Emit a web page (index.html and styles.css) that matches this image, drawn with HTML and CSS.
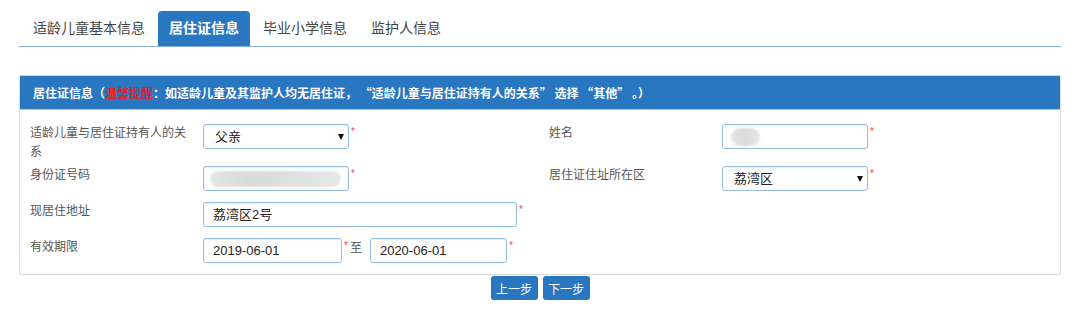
FILE: index.html
```html
<!DOCTYPE html>
<html lang="zh-CN">
<head>
<meta charset="utf-8">
<title>居住证信息</title>
<link rel="stylesheet" href="styles.css">
</head>
<body>
<div class="page">
  <ul class="tabs">
    <li class="tab">适龄儿童基本信息</li>
    <li class="tab active">居住证信息</li>
    <li class="tab">毕业小学信息</li>
    <li class="tab">监护人信息</li>
  </ul>

  <div class="panel">
    <div class="panel-head">居住证信息（<span class="warn">温馨提醒</span>：如适龄儿童及其监护人均无居住证， “适龄儿童与居住证持有人的关系” 选择 “其他” 。）</div>
    <div class="panel-body">
      <div class="form">
        <div class="field">
          <div class="label">适龄儿童与居住证持有人的关系</div>
          <div class="ctl select w146"><span>父亲</span><i class="caret"></i></div>
          <span class="req">*</span>
        </div>
        <div class="field">
          <div class="label">姓名</div>
          <div class="ctl w146 blurbox"><span class="blob blob-name"></span></div>
          <span class="req">*</span>
        </div>
        <div class="field">
          <div class="label">身份证号码</div>
          <div class="ctl w146 blurbox"><span class="blob blob-id"></span></div>
          <span class="req">*</span>
        </div>
        <div class="field">
          <div class="label">居住证住址所在区</div>
          <div class="ctl select w146"><span>荔湾区</span><i class="caret"></i></div>
          <span class="req">*</span>
        </div>
        <div class="field full">
          <div class="label">现居住地址</div>
          <div class="ctl w314">荔湾区2号</div>
          <span class="req">*</span>
        </div>
        <div class="field full">
          <div class="label">有效期限</div>
          <div class="ctl w139">2019-06-01</div>
          <span class="req">*</span>
          <span class="to">至</span>
          <div class="ctl w137">2020-06-01</div>
          <span class="req">*</span>
        </div>
      </div>
    </div>
  </div>

  <div class="actions">
    <button class="btn" type="button">上一步</button>
    <button class="btn" type="button">下一步</button>
  </div>
</div>
</body>
</html>
```

FILE: styles.css
```css
* { box-sizing: border-box; }

body {
  margin: 0;
  background: #fff;
  font-family: "Liberation Sans", "Noto Sans CJK SC", sans-serif;
  color: #555;
}

.page {
  width: 1080px;
  padding: 11px 19px 0 19px;
}

.tabs {
  list-style: none;
  margin: 0;
  padding: 0 0 0 3px;
  display: flex;
  border-bottom: 1px solid #86aedb;
}

.tab {
  height: 35px;
  line-height: 35px;
  padding: 0 11px;
  margin-right: 2px;
  font-size: 14px;
  color: #444;
}

.tab.active {
  background: #2a77c1;
  color: #fff;
  font-weight: bold;
  border-radius: 4px 4px 0 0;
}

.panel {
  margin-top: 28px;
  border: 1px solid #dcdcdc;
  border-top-color: #cfdcea;
}

.panel-head {
  height: 34px;
  line-height: 33px;
  background: #2a77c1;
  border-bottom: 1px solid #a7c6ea;
  padding-left: 13px;
  color: #fff;
  font-family: "Noto Sans CJK SC", sans-serif;
  font-size: 12px;
  font-weight: bold;
  white-space: nowrap;
}

.warn { color: #e3211e; }

.panel-body {
  padding: 14px 0 0 10px;
}

.form {
  display: grid;
  grid-template-columns: 519px 1fr;
}

.field {
  display: flex;
  align-items: flex-start;
  min-height: 36px;
}

.field.full { grid-column: 1 / 2; }

.label {
  width: 173px;
  flex-shrink: 0;
  padding: 0 13px 4px 0;
  font-size: 12px;
  line-height: 19px;
  color: #555;
}

.ctl {
  height: 25px;
  border: 1px solid #93bbe6;
  border-radius: 3px;
  background: #fff;
  box-shadow: inset 0 1px 1px rgba(0,0,0,0.06);
  padding: 0 9px;
  font-size: 13px;
  line-height: 23px;
  color: #222;
  flex-shrink: 0;
}

.w146 { width: 146px; }
.w314 { width: 314px; }
.w139 { width: 139px; }
.w137 { width: 137px; }

.select {
  display: flex;
  align-items: center;
  justify-content: space-between;
  padding: 0 4px 0 11px;
}

.caret {
  width: 0;
  height: 0;
  border-left: 3.5px solid transparent;
  border-right: 3.5px solid transparent;
  border-top: 6px solid #111;
}

.blurbox {
  display: flex;
  align-items: center;
  padding: 0 6px;
}

.blob {
  display: block;
  filter: blur(0.8px);
}

.blob-id {
  width: 131px;
  height: 16px;
  border-radius: 8px;
  background: linear-gradient(90deg, #e5e5e5 0%, #d9d9d9 30%, #dedede 55%, #e0e2e4 75%, #e7e7e7 100%);
}

.blob-name {
  margin-left: 2px;
  width: 29px;
  height: 18px;
  border-radius: 9px;
  background: linear-gradient(90deg, #e4e4e4 0%, #dadada 50%, #e6e8ea 100%);
}

.req {
  color: #f04848;
  font-size: 10px;
  line-height: 10px;
  margin: 3px 0 0 2px;
}

.to {
  font-size: 12px;
  line-height: 19px;
  color: #555;
  margin: 1px 8px 0 2px;
}

.actions {
  display: flex;
  justify-content: center;
  gap: 5px;
  margin-top: 1px;
}

.btn {
  width: 47px;
  height: 24px;
  border: none;
  border-radius: 3px;
  background: #2a77c1;
  color: #fff;
  font-family: "Liberation Sans", "Noto Sans CJK SC", sans-serif;
  font-size: 12px;
  padding: 0;
}
```
